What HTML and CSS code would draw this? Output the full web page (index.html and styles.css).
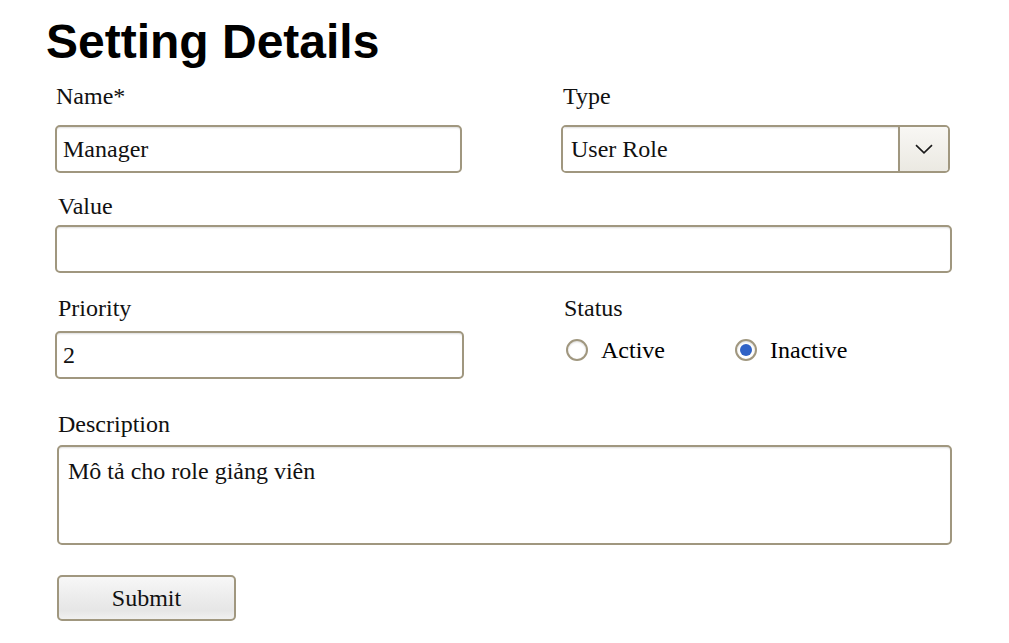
FILE: index.html
```html
<!DOCTYPE html>
<html lang="vi">
<head>
<meta charset="utf-8">
<title>Setting Details</title>
<link rel="stylesheet" href="styles.css">
</head>
<body>
<main class="page">
  <h1 class="title">Setting Details</h1>
  <form class="form">
    <div class="row row-top two-col">
      <div class="field">
        <label class="label label-name" for="name">Name*</label>
        <input class="input input-name" id="name" type="text" value="Manager">
      </div>
      <div class="field">
        <label class="label label-type" for="type">Type</label>
        <div class="select">
          <select class="select-native" id="type">
            <option>User Role</option>
          </select>
          <span class="select-btn">
            <svg class="chevron" width="18" height="10" viewBox="0 0 18 10" aria-hidden="true">
              <path d="M1 1.2 L9 8.8 L17 1.2" fill="none" stroke="#1a1a1a" stroke-width="1.6"/>
            </svg>
          </span>
        </div>
      </div>
    </div>

    <div class="row row-value">
      <label class="label label-indent" for="value">Value</label>
      <input class="input input-value" id="value" type="text" value="">
    </div>

    <div class="row row-priority two-col">
      <div class="field">
        <label class="label label-indent" for="priority">Priority</label>
        <input class="input input-priority" id="priority" type="text" value="2">
      </div>
      <div class="field">
        <span class="label label-indent">Status</span>
        <div class="radios">
          <label class="radio-option radio-first">
            <input class="radio" type="radio" name="status" value="active">
            <span>Active</span>
          </label>
          <label class="radio-option">
            <input class="radio" type="radio" name="status" value="inactive" checked>
            <span>Inactive</span>
          </label>
        </div>
      </div>
    </div>

    <div class="row row-desc">
      <label class="label label-indent" for="desc">Description</label>
      <textarea class="textarea" id="desc">Mô tả cho role giảng viên</textarea>
    </div>

    <div class="row row-submit">
      <button class="button" type="button">Submit</button>
    </div>
  </form>
</main>
</body>
</html>
```

FILE: styles.css
```css
* {
  box-sizing: border-box;
}

body {
  margin: 0;
  background: #ffffff;
  color: #000000;
  font-family: "Liberation Serif", "Times New Roman", serif;
  font-size: 24px;
}

.page {
  padding-top: 14px;
}

.title {
  margin: 0 0 0 46px;
  font-family: "Liberation Sans", Arial, sans-serif;
  font-size: 48px;
  font-weight: bold;
  line-height: 55px;
}

.form {
  margin-left: 55px;
  width: 896px;
}

.two-col {
  display: grid;
  grid-template-columns: 408px 1fr;
  column-gap: 98px;
}

.field {
  display: flex;
  flex-direction: column;
  align-items: flex-start;
}

.label {
  display: block;
  line-height: 28px;
  color: #111;
}

.label-name {
  padding-left: 1px;
}

.label-type {
  padding-left: 2px;
}

.label-indent {
  padding-left: 3px;
}

.input,
.textarea,
.select,
.button {
  border: 2px solid #a0977f;
  border-radius: 5px;
  font-family: inherit;
  font-size: 24px;
  color: #111;
}

.input {
  display: block;
  height: 48px;
  padding: 0 6px;
  background: #fff;
  box-shadow: inset 0 2px 2px -1px rgba(0, 0, 0, 0.14);
  outline: none;
}

.row-top {
  margin-top: 13px;
}

.input-name {
  width: 407px;
  margin-top: 15px;
}

.select {
  margin-top: 15px;
  width: 389px;
  height: 48px;
  display: flex;
  overflow: hidden;
  background: #fff;
}

.select-native {
  flex: 1;
  appearance: none;
  -webkit-appearance: none;
  border: none;
  outline: none;
  background: #fff;
  font-family: inherit;
  font-size: 24px;
  color: #111;
  padding: 0 0 0 8px;
  box-shadow: inset 0 2px 2px -1px rgba(0, 0, 0, 0.14);
}

.select-btn {
  width: 50px;
  border-left: 2px solid #a0977f;
  background: linear-gradient(#f8f7f4, #ebe9e2);
  display: flex;
  align-items: center;
  justify-content: center;
}

.row-value {
  margin-top: 19px;
}

.input-value {
  width: 897px;
  margin-top: 5px;
}

.row-priority {
  margin-top: 21px;
}

.input-priority {
  width: 409px;
  margin-top: 9px;
}

.radios {
  display: flex;
  align-items: center;
  margin-top: 14px;
  margin-left: 5px;
  height: 28px;
}

.radio-option {
  display: flex;
  align-items: center;
  gap: 13px;
  line-height: 28px;
}

.radio-first {
  width: 169px;
}

.radio {
  appearance: none;
  -webkit-appearance: none;
  margin: 0;
  width: 22px;
  height: 22px;
  border: 2px solid #a0977f;
  border-radius: 50%;
  background: #fff;
  box-shadow: inset 0 1px 2px rgba(0, 0, 0, 0.15);
  display: grid;
  place-items: center;
}

.radio:checked::after {
  content: "";
  width: 12px;
  height: 12px;
  border-radius: 50%;
  background: #2f62c6;
}

.row-desc {
  margin-top: 31px;
}

.textarea {
  display: block;
  margin: 7px 0 0 2px;
  width: 895px;
  height: 100px;
  padding: 10px 9px;
  resize: none;
  line-height: 28px;
  background: #fff;
  box-shadow: inset 0 2px 2px -1px rgba(0, 0, 0, 0.14);
  outline: none;
}

.row-submit {
  margin-top: 30px;
}

.button {
  display: block;
  margin-left: 2px;
  width: 179px;
  height: 46px;
  background: linear-gradient(#f7f7f7 0%, #ececec 50%, #e6e6e6 80%, #f0f0f0 100%);
  text-align: center;
  padding: 0;
}
```
